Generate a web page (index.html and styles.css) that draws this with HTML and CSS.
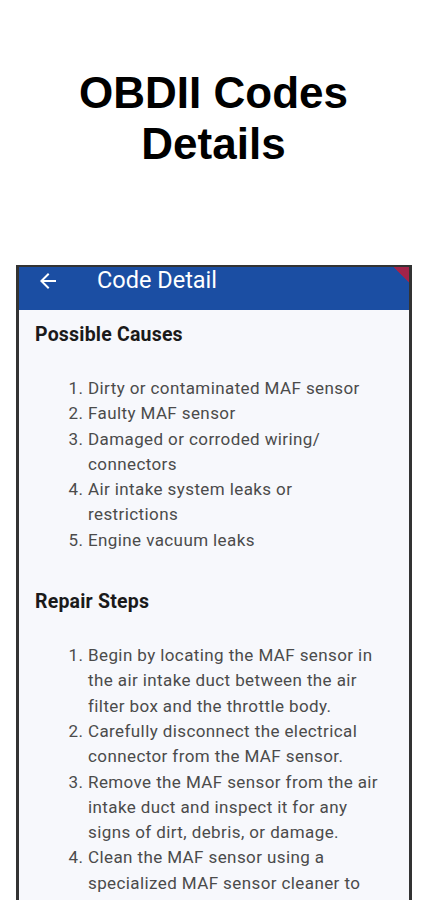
FILE: index.html
```html
<!DOCTYPE html>
<html lang="en">
<head>
<meta charset="utf-8">
<title>OBDII Codes Details</title>
<link rel="stylesheet" href="styles.css">
</head>
<body>
<h1 class="promo-title">OBDII Codes<br>Details</h1>
<div class="phone">
  <header class="appbar">
    <svg class="back" viewBox="0 0 24 24" width="24" height="24" aria-hidden="true">
      <path d="M20 11H7.83l5.59-5.59L12 4l-8 8 8 8 1.41-1.41L7.83 13H20v-2z" fill="#ffffff"/>
    </svg>
    <span class="appbar-title">Code Detail</span>
    <span class="debug-banner"></span>
  </header>
  <main class="content">
    <h2 class="section-title">Possible Causes</h2>
    <ol class="steps first">
      <li>Dirty or contaminated MAF sensor</li>
      <li>Faulty MAF sensor</li>
      <li>Damaged or corroded wiring/ connectors</li>
      <li>Air intake system leaks or restrictions</li>
      <li>Engine vacuum leaks</li>
    </ol>
    <h2 class="section-title">Repair Steps</h2>
    <ol class="steps">
      <li>Begin by locating the MAF sensor in the air intake duct between the air filter box and the throttle body.</li>
      <li>Carefully disconnect the electrical connector from the MAF sensor.</li>
      <li>Remove the MAF sensor from the air intake duct and inspect it for any signs of dirt, debris, or damage.</li>
      <li>Clean the MAF sensor using a specialized MAF sensor cleaner to remove any contaminants.</li>
    </ol>
  </main>
</div>
</body>
</html>
```
FILE: styles.css
```css
html, body {
  margin: 0;
  padding: 0;
  background: #ffffff;
  height: 900px;
  overflow: hidden;
}
.promo-title {
  margin: 67px 0 0;
  font-family: "Liberation Sans", Arial, sans-serif;
  font-weight: 700;
  font-size: 44px;
  line-height: 51px;
  text-align: center;
  color: #000000;
}
.phone {
  margin: 96px 0 0 16px;
  width: 390px;
  height: 700px;
  border: 3px solid #333333;
  border-top-width: 2px;
  background: #f7f8fc;
}
.appbar {
  position: relative;
  height: 43px;
  background: #1b4ea3;
  display: flex;
  align-items: flex-start;
  padding-top: 2px;
  box-sizing: border-box;
  overflow: hidden;
}
.back {
  margin: 0 0 0 17px;
  flex: none;
}
.appbar-title {
  margin-left: 37px;
  margin-top: -3px;
  font-family: Roboto, "Noto Sans", sans-serif;
  font-size: 23.5px;
  line-height: 28px;
  color: #ffffff;
}
.debug-banner {
  position: absolute;
  top: 0;
  right: 0;
  width: 16px;
  height: 16px;
  background: linear-gradient(225deg, #a3234a 0 50%, transparent 50%);
}
.content {
  padding: 13px 26px 0 16px;
  font-family: Roboto, "Noto Sans", sans-serif;
}
.section-title {
  margin: 0;
  font-size: 19.5px;
  line-height: 24px;
  font-weight: 700;
  letter-spacing: 0.2px;
  color: #1a1a1a;
}
.steps {
  margin: 29px 0 36px;
  padding-left: 53px;
  font-size: 17px;
  line-height: 25.3px;
  letter-spacing: 0.4px;
  color: #4b4b4b;
}
.steps.first {
  margin-bottom: 37px;
}
```
